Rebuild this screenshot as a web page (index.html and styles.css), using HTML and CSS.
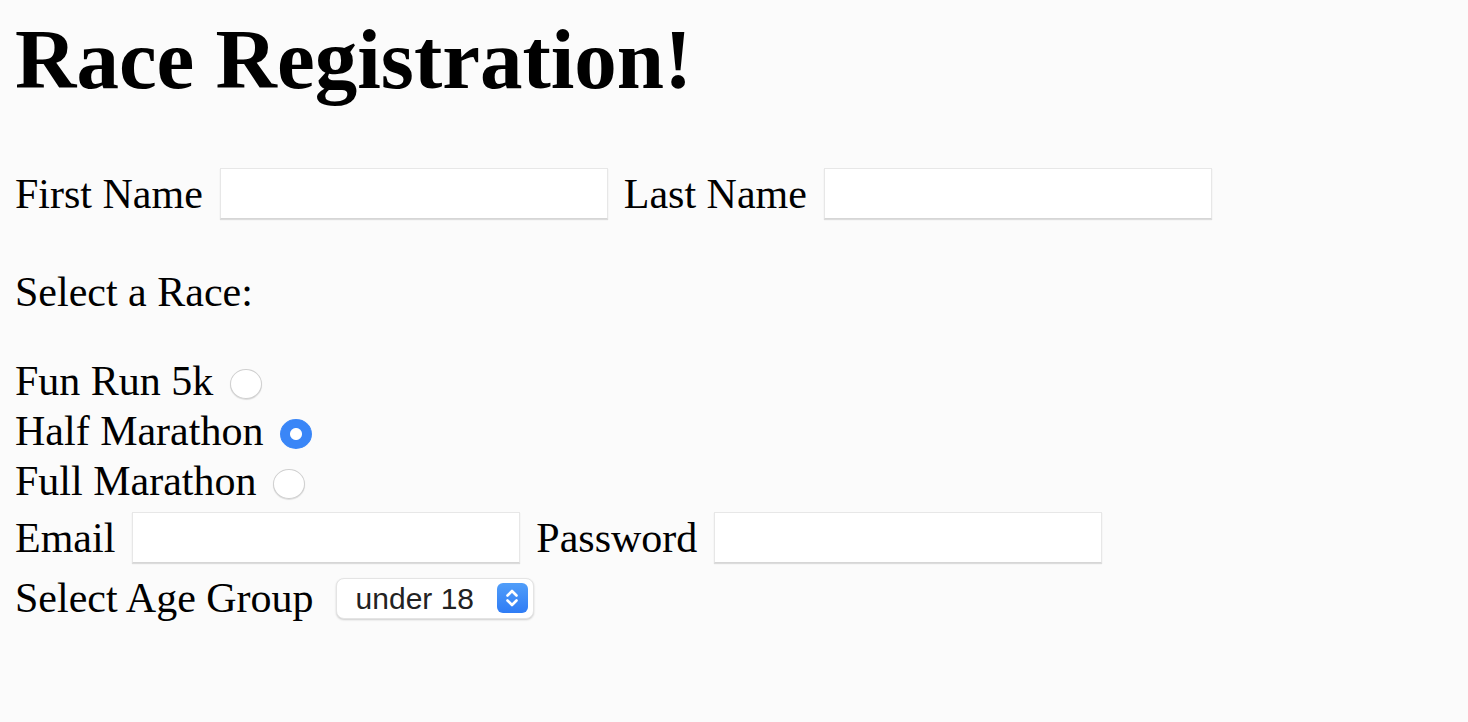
FILE: index.html
```html
<!DOCTYPE html>
<html lang="en">
<head>
<meta charset="utf-8">
<title>Race Registration</title>
<link rel="stylesheet" href="styles.css">
</head>
<body>
<h1 class="title">Race Registration!</h1>
<form class="form">
  <div class="row row-name">
    <label class="label" for="first">First Name</label>
    <input class="field" id="first" type="text">
    <label class="label" for="last">Last Name</label>
    <input class="field" id="last" type="text">
  </div>
  <p class="section">Select a Race:</p>
  <div class="races">
    <label class="race">Fun Run 5k<input class="radio" type="radio" name="race" value="5k"></label>
    <label class="race">Half Marathon<input class="radio" type="radio" name="race" value="half" checked></label>
    <label class="race">Full Marathon<input class="radio" type="radio" name="race" value="full"></label>
  </div>
  <div class="row row-account">
    <label class="label" for="email">Email</label>
    <input class="field" id="email" type="email">
    <label class="label" for="password">Password</label>
    <input class="field" id="password" type="password">
  </div>
  <div class="row row-age">
    <label class="label" for="age">Select Age Group</label>
    <span class="select-wrap">
      <select class="select" id="age">
        <option>under 18</option>
        <option>18 - 29</option>
        <option>30 - 49</option>
        <option>50 and over</option>
      </select>
      <span class="select-btn" aria-hidden="true">
        <svg width="16" height="24" viewBox="0 0 16 24" fill="none" stroke="#fff" stroke-width="2.6" stroke-linecap="round" stroke-linejoin="round">
          <path d="M3.5 9.5 L8 5 L12.5 9.5"/>
          <path d="M3.5 14.5 L8 19 L12.5 14.5"/>
        </svg>
      </span>
    </span>
  </div>
</form>
</body>
</html>
```

FILE: styles.css
```css
html, body {
  background: #fbfbfb;
}

body {
  margin: 0;
  padding: 0 15px;
  font-family: "Liberation Serif", "Times New Roman", serif;
  font-size: 42px;
  color: #000;
}

.title {
  margin: 17px 0 0;
  font-size: 85px;
  line-height: 84px;
  font-weight: bold;
}

.form {
  margin: 0;
}

.row {
  display: flex;
  align-items: center;
}

.label {
  line-height: 48px;
  white-space: nowrap;
}

.row-name {
  margin-top: 67px;
  height: 51px;
}

.field {
  box-sizing: border-box;
  width: 388px;
  height: 51px;
  margin: 0 16px 0 17px;
  padding: 0 8px;
  border: 1px solid #e7e7e7;
  border-bottom-color: #d6d6d6;
  background: #fff;
  box-shadow: 0 1px 1px rgba(0, 0, 0, 0.12);
  font: inherit;
  outline: none;
}

.section {
  margin: 49px 0 0;
  line-height: 48px;
}

.races {
  margin-top: 40px;
  display: flex;
  flex-direction: column;
}

.race {
  display: flex;
  align-items: center;
  height: 50px;
  line-height: 50px;
}

.radio {
  appearance: none;
  -webkit-appearance: none;
  box-sizing: border-box;
  width: 32px;
  height: 30px;
  margin: 6px 0 0 17px;
  border-radius: 50%;
  border: 1px solid #cfcfcf;
  background: #fff;
  box-shadow: 0 1px 1px rgba(0, 0, 0, 0.12);
}

.radio:checked {
  border-color: #3a86f7;
  background: radial-gradient(circle, #fff 0, #fff 5.5px, #3a86f7 6.5px);
  box-shadow: none;
}

.row-account {
  margin-top: 6px;
  height: 51px;
}

.row-age {
  margin-top: 11px;
  height: 48px;
}

.select-wrap {
  position: relative;
  display: inline-flex;
  margin-left: 22px;
}

.select {
  appearance: none;
  -webkit-appearance: none;
  box-sizing: border-box;
  width: 198px;
  height: 41px;
  margin: 0;
  padding: 0 0 0 19px;
  border: 1px solid #e4e4e4;
  border-radius: 8px;
  background: #fff;
  box-shadow: 0 1px 2px rgba(0, 0, 0, 0.18);
  font-family: "Liberation Sans", Arial, sans-serif;
  font-size: 30px;
  color: #222;
  outline: none;
}

.select-btn {
  position: absolute;
  right: 6px;
  top: 5px;
  width: 31px;
  height: 30px;
  border-radius: 6px;
  background: linear-gradient(#519ef9, #2f7cf5);
  display: flex;
  align-items: center;
  justify-content: center;
  pointer-events: none;
}
```
